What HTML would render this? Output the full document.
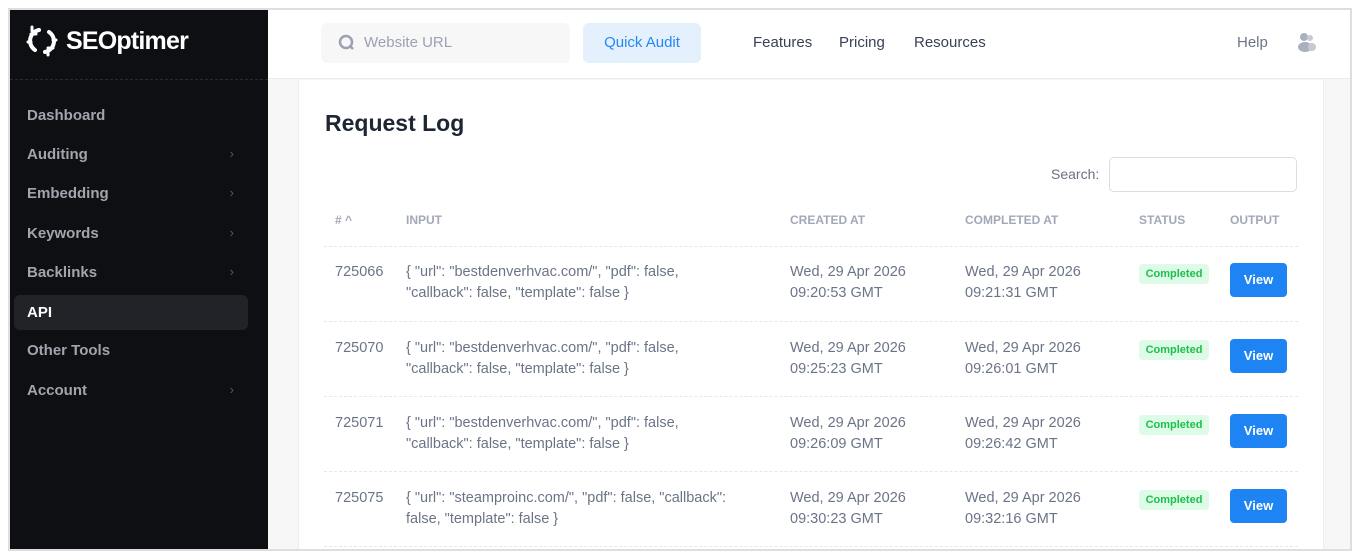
<!DOCTYPE html>
<html><head><style>
*{box-sizing:border-box;margin:0;padding:0}
body{width:1360px;height:560px;background:#fff;font-family:"Liberation Sans",sans-serif;position:relative;overflow:hidden}
.frame{position:absolute;left:8px;top:8px;width:1344px;height:543px;border:2px solid #dedede;background:#f7f7f8;overflow:hidden}
.side{position:absolute;left:0;top:0;width:258px;height:100%;background:#0e0f13}
.logo{position:absolute;left:13px;top:12px;color:#fff;font-weight:bold;font-size:25px;letter-spacing:-0.8px;display:flex;align-items:center;gap:5px}
.sep{position:absolute;left:0;top:69px;width:258px;border-top:1px dashed #2a2b30}
.nav{position:absolute;left:4px;width:234px;height:35px;border-radius:6px;color:#a3a5ae;font-weight:bold;font-size:15px;padding:9px 0 0 13px}
.nav .ch{position:absolute;right:14px;top:9px;color:#555860;font-weight:normal;font-size:13px}
.nav.act{background:#222328;color:#fff}
.top{position:absolute;left:258px;top:0;right:0;height:69px;background:#fff;border-bottom:1px solid #ececee}
.inp{position:absolute;left:53px;top:13px;width:249px;height:40px;background:#f7f7f8;border-radius:6px;color:#9ba1b0;font-size:15px;padding:11px 0 0 43px}
.qa{position:absolute;left:315px;top:13px;width:118px;height:40px;background:#e5f0fd;border-radius:6px;color:#2487f5;font-size:15px;text-align:center;padding-top:11px}
.tl{position:absolute;top:24px;color:#384155;font-size:15px}
.card{position:absolute;left:288px;top:70px;width:1026px;height:480px;background:#fff;border-left:1px solid #eee;border-right:1px solid #eee}
h1{position:absolute;left:26px;top:30px;font-size:23px;color:#1e2533;font-weight:bold}
.sl{position:absolute;left:752px;top:86px;color:#6b7280;font-size:14px}
.sb{position:absolute;left:810px;top:77px;width:188px;height:35px;border:1px solid #dcdde3;border-radius:5px}
.th{position:absolute;top:133px;font-size:12px;font-weight:bold;color:#a3a8b8}
.hl{position:absolute;left:25px;width:974px;border-top:1px dashed #e6e7ea}
.c{position:absolute;font-size:14.5px;color:#6b7487;line-height:21px}
.bd{position:absolute;left:840px;width:70px;height:20px;background:#ddfbe6;border-radius:4px;color:#1dbf4e;font-size:11px;font-weight:bold;text-align:center;line-height:20px}
.vw{position:absolute;left:931px;width:57px;height:34px;background:#1f84f3;border-radius:4px;color:#fff;font-size:13px;font-weight:bold;text-align:center;line-height:34px}
</style></head><body>
<div class="frame">
<div class="side">
<div class="logo"><svg width="38" height="38" viewBox="0 0 38 38" fill="none" stroke="#fff" stroke-width="4" stroke-linecap="round"><path d="M16 8 A11 11 0 0 0 12 28"/><path d="M22 30 A11 11 0 0 0 26 10"/><path d="M8 12 h5 M9 5 v4 M25 33 v-4 M30 26 h-5 M5 20 h3 M33 18 h-3" stroke-width="3"/></svg>SEOptimer</div>
<div class="sep"></div>
<div class="nav" style="top:88px">Dashboard</div>
<div class="nav" style="top:127px">Auditing<span class="ch">›</span></div>
<div class="nav" style="top:166px">Embedding<span class="ch">›</span></div>
<div class="nav" style="top:206px">Keywords<span class="ch">›</span></div>
<div class="nav" style="top:245px">Backlinks<span class="ch">›</span></div>
<div class="nav act" style="top:285px">API</div>
<div class="nav" style="top:323px">Other Tools</div>
<div class="nav" style="top:363px">Account<span class="ch">›</span></div>
</div>
<div class="top">
<div class="inp"><svg style="position:absolute;left:17px;top:11px" width="18" height="18" viewBox="0 0 18 18" fill="none" stroke="#9ba1b0" stroke-width="2.5"><circle cx="8" cy="8" r="6"/><path d="M12.5 12.5 L15 15"/></svg>Website URL</div>
<div class="qa">Quick Audit</div>
<div class="tl" style="left:485px">Features</div>
<div class="tl" style="left:571px">Pricing</div>
<div class="tl" style="left:646px">Resources</div>
<div class="tl" style="left:969px;color:#6b7487">Help</div>
<svg style="position:absolute;left:1029px;top:22px" width="20" height="20" viewBox="0 0 20 20" fill="#aab0bd"><circle cx="7" cy="5" r="4"/><circle cx="13" cy="6" r="3" fill="#c5cad3"/><ellipse cx="8" cy="15" rx="7" ry="5"/><ellipse cx="15" cy="15" rx="4" ry="4" fill="#c5cad3"/></svg>
</div>
<div class="card">
<h1>Request Log</h1>
<div class="sl">Search:</div><div class="sb"></div>
<div class="th" style="left:36px"># ^</div>
<div class="th" style="left:107px">INPUT</div>
<div class="th" style="left:491px">CREATED AT</div>
<div class="th" style="left:666px">COMPLETED AT</div>
<div class="th" style="left:840px">STATUS</div>
<div class="th" style="left:931px">OUTPUT</div>
<div class="hl" style="top:166px"></div>
<div class="c" style="left:36px;top:182px">725066</div>
<div class="c" style="left:107px;top:182px">{ "url": "bestdenverhvac.com/", "pdf": false,<br>"callback": false, "template": false }</div>
<div class="c" style="left:491px;top:182px">Wed, 29 Apr 2026<br>09:20:53 GMT</div>
<div class="c" style="left:666px;top:182px">Wed, 29 Apr 2026<br>09:21:31 GMT</div>
<div class="bd" style="top:184px">Completed</div><div class="vw" style="top:183px">View</div>
<div class="hl" style="top:241px"></div>
<div class="c" style="left:36px;top:258px">725070</div>
<div class="c" style="left:107px;top:258px">{ "url": "bestdenverhvac.com/", "pdf": false,<br>"callback": false, "template": false }</div>
<div class="c" style="left:491px;top:258px">Wed, 29 Apr 2026<br>09:25:23 GMT</div>
<div class="c" style="left:666px;top:258px">Wed, 29 Apr 2026<br>09:26:01 GMT</div>
<div class="bd" style="top:260px">Completed</div><div class="vw" style="top:259px">View</div>
<div class="hl" style="top:316px"></div>
<div class="c" style="left:36px;top:333px">725071</div>
<div class="c" style="left:107px;top:333px">{ "url": "bestdenverhvac.com/", "pdf": false,<br>"callback": false, "template": false }</div>
<div class="c" style="left:491px;top:333px">Wed, 29 Apr 2026<br>09:26:09 GMT</div>
<div class="c" style="left:666px;top:333px">Wed, 29 Apr 2026<br>09:26:42 GMT</div>
<div class="bd" style="top:335px">Completed</div><div class="vw" style="top:334px">View</div>
<div class="hl" style="top:391px"></div>
<div class="c" style="left:36px;top:408px">725075</div>
<div class="c" style="left:107px;top:408px">{ "url": "steamproinc.com/", "pdf": false, "callback":<br>false, "template": false }</div>
<div class="c" style="left:491px;top:408px">Wed, 29 Apr 2026<br>09:30:23 GMT</div>
<div class="c" style="left:666px;top:408px">Wed, 29 Apr 2026<br>09:32:16 GMT</div>
<div class="bd" style="top:410px">Completed</div><div class="vw" style="top:409px">View</div>
<div class="hl" style="top:466px"></div>
</div>
</div>
</body></html>
